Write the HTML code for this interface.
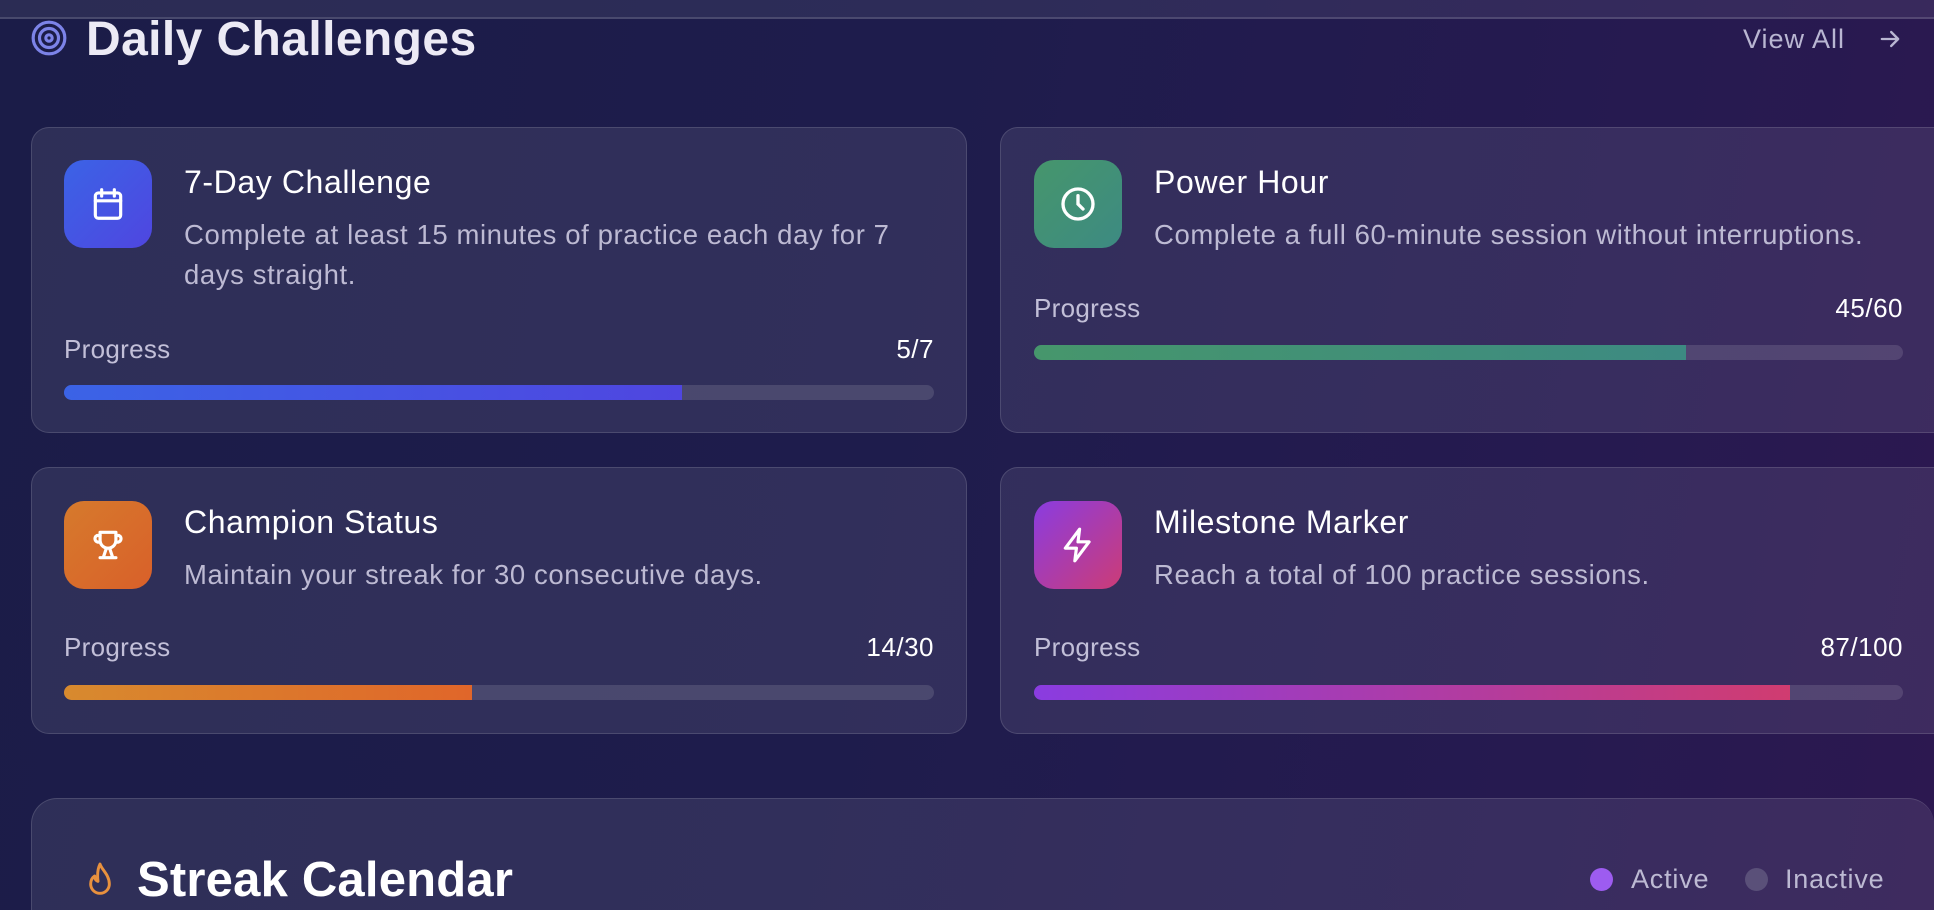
<!DOCTYPE html>
<html><head><meta charset="utf-8"><style>
*{margin:0;padding:0;box-sizing:border-box}
html,body{width:1934px;height:910px;overflow:hidden}
body{font-family:"Liberation Sans",sans-serif;color:#fff;
background:linear-gradient(100deg,#1b1c48 0%,#1e1c4c 45%,#261a50 80%,#2c1850 100%)}
#w{position:relative;width:1934px;height:910px;overflow:hidden}
.topbar{position:absolute;left:0;top:0;width:1934px;height:19px;background:rgba(255,255,255,0.07);border-bottom:2px solid rgba(255,255,255,0.14)}
.h1{position:absolute;left:86px;top:12px;font-size:48px;font-weight:bold;color:#eceaf5;letter-spacing:0.4px}
.view{position:absolute;left:1743px;top:24px;font-size:27px;color:#b9b6d2;letter-spacing:1px}
.card{position:absolute;border-radius:18px;background:rgba(255,255,255,0.085);border:1.5px solid rgba(255,255,255,0.13)}
.ic{position:absolute;width:88px;height:88px;border-radius:20px;display:flex;align-items:center;justify-content:center}
.t{position:absolute;font-size:32px;color:#fff;letter-spacing:0.6px}
.d{position:absolute;font-size:27.5px;color:#bdbad3;line-height:40px;letter-spacing:0.6px;white-space:nowrap}
.pl{position:absolute;font-size:26px;color:#c2bfd8;letter-spacing:0.3px}
.pv{position:absolute;font-size:26px;color:#fff;text-align:right;letter-spacing:0.5px}
.bar{position:absolute;height:15px;border-radius:8px;background:rgba(255,255,255,0.12);overflow:hidden}
.bar i{display:block;height:100%}
</style></head><body><div id="w">
<div class="topbar"></div>
<svg style="position:absolute;left:30px;top:19px" width="38" height="38" viewBox="0 0 24 24" fill="none" stroke="#7c83e8" stroke-width="2"><circle cx="12" cy="12" r="10"/><circle cx="12" cy="12" r="6"/><circle cx="12" cy="12" r="2"/></svg>
<div class="h1">Daily Challenges</div>
<div class="view">View All</div>
<svg style="position:absolute;left:1876px;top:25px" width="28" height="28" viewBox="0 0 24 24" fill="none" stroke="#b9b6d2" stroke-width="2" stroke-linecap="round" stroke-linejoin="round"><path d="M5 12h14M13 6l6 6-6 6"/></svg>

<div class="card" style="left:31px;top:127px;width:936px;height:306px"></div>
<div class="ic" style="left:64px;top:160px;background:linear-gradient(135deg,#3b63e6,#4f46e0)">
<svg width="38" height="38" viewBox="0 0 24 24" fill="none" stroke="#fff" stroke-width="2" stroke-linecap="round"><rect x="4" y="5" width="16" height="16" rx="2"/><path d="M8 3v4M16 3v4M4 10h16"/></svg></div>
<div class="t" style="left:184px;top:164px">7-Day Challenge</div>
<div class="d" style="left:184px;top:215px">Complete at least 15 minutes of practice each day for 7<br>days straight.</div>
<div class="pl" style="left:64px;top:334px">Progress</div>
<div class="pv" style="left:834px;top:334px;width:100px">5/7</div>
<div class="bar" style="left:64px;top:385px;width:870px"><i style="width:618px;background:linear-gradient(90deg,#3b63e6,#4f46e0)"></i></div>

<div class="card" style="left:1000px;top:127px;width:960px;height:306px"></div>
<div class="ic" style="left:1034px;top:160px;background:linear-gradient(135deg,#46966c,#3d8a82)">
<svg width="40" height="40" viewBox="0 0 24 24" fill="none" stroke="#fff" stroke-width="2" stroke-linecap="round"><circle cx="12" cy="12" r="9"/><path d="M12 7v5l3 3"/></svg></div>
<div class="t" style="left:1154px;top:164px">Power Hour</div>
<div class="d" style="left:1154px;top:215px">Complete a full 60-minute session without interruptions.</div>
<div class="pl" style="left:1034px;top:293px">Progress</div>
<div class="pv" style="left:1803px;top:293px;width:100px">45/60</div>
<div class="bar" style="left:1034px;top:345px;width:869px"><i style="width:652px;background:linear-gradient(90deg,#46966c,#3d8a82)"></i></div>

<div class="card" style="left:31px;top:467px;width:936px;height:267px"></div>
<div class="ic" style="left:64px;top:501px;background:linear-gradient(135deg,#d67a2c,#d9602a)">
<svg width="38" height="38" viewBox="0 0 24 24" fill="none" stroke="#fff" stroke-width="2" stroke-linecap="round" stroke-linejoin="round"><path d="M7 4h10v5a5 5 0 0 1-10 0z"/><path d="M7 6H5a2 2 0 0 0 2 4M17 6h2a2 2 0 0 1-2 4"/><path d="M11 14l-2 6M13 14l2 6M7 20h10"/></svg></div>
<div class="t" style="left:184px;top:504px">Champion Status</div>
<div class="d" style="left:184px;top:555px">Maintain your streak for 30 consecutive days.</div>
<div class="pl" style="left:64px;top:632px">Progress</div>
<div class="pv" style="left:834px;top:632px;width:100px">14/30</div>
<div class="bar" style="left:64px;top:685px;width:870px"><i style="width:408px;background:linear-gradient(90deg,#d88a2e,#e0662a)"></i></div>

<div class="card" style="left:1000px;top:467px;width:934px;height:267px;border-right:none;border-radius:18px 0 0 18px"></div>
<div class="ic" style="left:1034px;top:501px;background:linear-gradient(135deg,#8a3ce0,#cc3c76)">
<svg width="38" height="38" viewBox="0 0 24 24" fill="none" stroke="#fff" stroke-width="2" stroke-linecap="round" stroke-linejoin="round"><path d="M13 2L4 14h7l-1 8 9-12h-7z"/></svg></div>
<div class="t" style="left:1154px;top:504px">Milestone Marker</div>
<div class="d" style="left:1154px;top:555px">Reach a total of 100 practice sessions.</div>
<div class="pl" style="left:1034px;top:632px">Progress</div>
<div class="pv" style="left:1803px;top:632px;width:100px">87/100</div>
<div class="bar" style="left:1034px;top:685px;width:869px"><i style="width:756px;background:linear-gradient(90deg,#8a3ce0,#d03c70)"></i></div>

<div class="card" style="left:31px;top:798px;width:1903px;height:112px;border-radius:26px 26px 0 0;border-bottom:none;border-right:none"></div>
<svg style="position:absolute;left:84px;top:861px" width="32" height="38" viewBox="0 0 24 28" fill="none" stroke="#e8913e" stroke-width="2.2" stroke-linecap="round" stroke-linejoin="round"><path d="M12 2c1 4 7 8 7 15a7 7 0 0 1-14 0c0-3 1.5-5 3-6 0 2 1 3.5 2.5 4C10 11 10 6 12 2z"/></svg>
<div style="position:absolute;left:137px;top:852px;font-size:49px;line-height:56px;font-weight:bold;color:#fff;letter-spacing:0.2px">Streak Calendar</div>
<div style="position:absolute;left:1590px;top:868px;width:23px;height:23px;border-radius:50%;background:#9d5cf0"></div>
<div style="position:absolute;left:1631px;top:863px;font-size:27px;line-height:32px;color:#bdbad3;letter-spacing:0.8px">Active</div>
<div style="position:absolute;left:1745px;top:868px;width:23px;height:23px;border-radius:50%;background:#5a5079"></div>
<div style="position:absolute;left:1785px;top:863px;font-size:27px;line-height:32px;color:#bdbad3;letter-spacing:0.8px">Inactive</div>
</div></body></html>
